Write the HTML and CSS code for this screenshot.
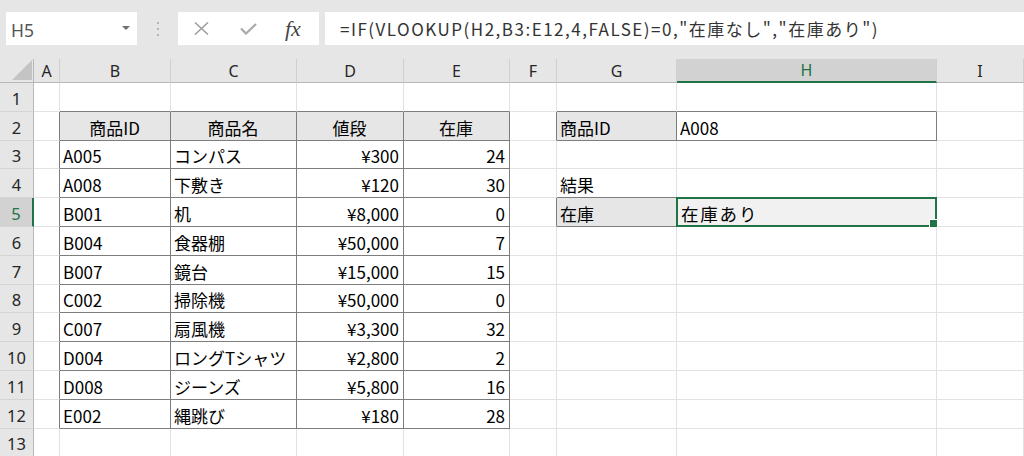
FILE: index.html
```html
<!DOCTYPE html>
<html lang="ja">
<head>
<meta charset="UTF-8">
<meta name="viewport" content="width=device-width, initial-scale=1.0">
<title>在庫確認</title>
<link rel="stylesheet" href="styles.css">
</head>
<body>

<!-- 数式バー -->
<div class="toolbar">
  <div class="namebox">
    <span>H5</span>
    <span class="arrow"></span>
  </div>
  <div class="grip"><i></i><i></i><i></i></div>
  <div class="buttons">
    <svg class="ic-x" width="15" height="13" viewBox="0 0 15 13"><path d="M1 0.5L14 12.5M14 0.5L1 12.5" stroke="#9c9c9c" stroke-width="1.5" fill="none"/></svg>
    <svg class="ic-ok" width="17" height="12" viewBox="0 0 17 12"><path d="M1 5.5L6 10.5L16 1" stroke="#a9a9a9" stroke-width="2.2" fill="none"/></svg>
    <span class="fx">fx</span>
  </div>
  <div class="formula">=IF(VLOOKUP(H2,B3:E12,4,FALSE)=0,"在庫なし","在庫あり")</div>
</div>

<!-- シート -->
<div class="sheet">
  <div class="corner"><span></span></div>
  <div class="ch">A</div>
  <div class="ch">B</div>
  <div class="ch">C</div>
  <div class="ch">D</div>
  <div class="ch">E</div>
  <div class="ch">F</div>
  <div class="ch">G</div>
  <div class="ch cur">H</div>
  <div class="ch">I</div>

  <!-- 1 -->
  <div class="rh">1</div>
  <div class="c"></div>
  <div class="c bb"></div>
  <div class="c bb"></div>
  <div class="c bb"></div>
  <div class="c bb"></div>
  <div class="c"></div>
  <div class="c bb"></div>
  <div class="c bb"></div>
  <div class="c"></div>

  <!-- 2 -->
  <div class="rh">2</div>
  <div class="c br"></div>
  <div class="c t th m">商品ID</div>
  <div class="c t th m">商品名</div>
  <div class="c t th m">値段</div>
  <div class="c t th m">在庫</div>
  <div class="c br"></div>
  <div class="c t th">商品ID</div>
  <div class="c t">A008</div>
  <div class="c"></div>

  <!-- 3 -->
  <div class="rh">3</div>
  <div class="c br"></div>
  <div class="c t">A005</div>
  <div class="c t">コンパス</div>
  <div class="c t r">¥300</div>
  <div class="c t r">24</div>
  <div class="c"></div>
  <div class="c"></div>
  <div class="c"></div>
  <div class="c"></div>

  <!-- 4 -->
  <div class="rh">4</div>
  <div class="c br"></div>
  <div class="c t">A008</div>
  <div class="c t">下敷き</div>
  <div class="c t r">¥120</div>
  <div class="c t r">30</div>
  <div class="c"></div>
  <div class="c bb">結果</div>
  <div class="c"></div>
  <div class="c"></div>

  <!-- 5 -->
  <div class="rh cur">5</div>
  <div class="c br"></div>
  <div class="c t">B001</div>
  <div class="c t">机</div>
  <div class="c t r">¥8,000</div>
  <div class="c t r">0</div>
  <div class="c br"></div>
  <div class="c t th">在庫</div>
  <div class="c sel">在庫あり</div>
  <div class="c"></div>

  <!-- 6 -->
  <div class="rh">6</div>
  <div class="c br"></div>
  <div class="c t">B004</div>
  <div class="c t">食器棚</div>
  <div class="c t r">¥50,000</div>
  <div class="c t r">7</div>
  <div class="c"></div>
  <div class="c"></div>
  <div class="c"></div>
  <div class="c"></div>

  <!-- 7 -->
  <div class="rh">7</div>
  <div class="c br"></div>
  <div class="c t">B007</div>
  <div class="c t">鏡台</div>
  <div class="c t r">¥15,000</div>
  <div class="c t r">15</div>
  <div class="c"></div>
  <div class="c"></div>
  <div class="c"></div>
  <div class="c"></div>

  <!-- 8 -->
  <div class="rh">8</div>
  <div class="c br"></div>
  <div class="c t">C002</div>
  <div class="c t">掃除機</div>
  <div class="c t r">¥50,000</div>
  <div class="c t r">0</div>
  <div class="c"></div>
  <div class="c"></div>
  <div class="c"></div>
  <div class="c"></div>

  <!-- 9 -->
  <div class="rh">9</div>
  <div class="c br"></div>
  <div class="c t">C007</div>
  <div class="c t">扇風機</div>
  <div class="c t r">¥3,300</div>
  <div class="c t r">32</div>
  <div class="c"></div>
  <div class="c"></div>
  <div class="c"></div>
  <div class="c"></div>

  <!-- 10 -->
  <div class="rh">10</div>
  <div class="c br"></div>
  <div class="c t">D004</div>
  <div class="c t">ロングTシャツ</div>
  <div class="c t r">¥2,800</div>
  <div class="c t r">2</div>
  <div class="c"></div>
  <div class="c"></div>
  <div class="c"></div>
  <div class="c"></div>

  <!-- 11 -->
  <div class="rh">11</div>
  <div class="c br"></div>
  <div class="c t">D008</div>
  <div class="c t">ジーンズ</div>
  <div class="c t r">¥5,800</div>
  <div class="c t r">16</div>
  <div class="c"></div>
  <div class="c"></div>
  <div class="c"></div>
  <div class="c"></div>

  <!-- 12 -->
  <div class="rh">12</div>
  <div class="c br"></div>
  <div class="c t">E002</div>
  <div class="c t">縄跳び</div>
  <div class="c t r">¥180</div>
  <div class="c t r">28</div>
  <div class="c"></div>
  <div class="c"></div>
  <div class="c"></div>
  <div class="c"></div>

  <!-- 13 -->
  <div class="rh">13</div>
  <div class="c"></div>
  <div class="c"></div>
  <div class="c"></div>
  <div class="c"></div>
  <div class="c"></div>
  <div class="c"></div>
  <div class="c"></div>
  <div class="c"></div>
  <div class="c"></div>
</div>

</body>
</html>
```

FILE: styles.css
```css
* {
  box-sizing: border-box;
}

body {
  margin: 0;
  width: 1024px;
  height: 456px;
  overflow: hidden;
  background: #fff;
  font-family: "Noto Sans", sans-serif;
}

/* 数式バー */
.toolbar {
  display: flex;
  align-items: flex-start;
  height: 59px;
  padding: 12px 0 0 6px;
  background: #e6e6e6;
}

.namebox {
  display: flex;
  align-items: center;
  justify-content: space-between;
  width: 131px;
  height: 33px;
  padding: 3px 7px 0 5px;
  background: #fff;
  color: #555;
  font-size: 17.5px;
}

.arrow {
  width: 0;
  height: 0;
  margin-top: -5px;
  border-left: 4px solid transparent;
  border-right: 4px solid transparent;
  border-top: 4px solid #707070;
}

.grip {
  display: flex;
  flex-direction: column;
  gap: 4px;
  margin: 10px 19px 0 20px;
}

.grip i {
  width: 2px;
  height: 2px;
  background: #b4b4b4;
}

.buttons {
  display: flex;
  align-items: center;
  width: 141px;
  height: 33px;
  background: #fff;
}

.ic-x {
  margin-left: 16px;
}

.ic-ok {
  margin-left: 31px;
}

.fx {
  margin-left: 28px;
  font-family: "Liberation Serif", serif;
  font-style: italic;
  font-size: 22px;
  color: #444;
}

.formula {
  flex: 1;
  display: flex;
  align-items: center;
  height: 33px;
  margin-left: 6px;
  padding-left: 15px;
  background: #fff;
  color: #333;
  font-family: "Noto Sans CJK JP", sans-serif;
  font-size: 17px;
  letter-spacing: 1.5px;
  white-space: nowrap;
}

/* シート */
.sheet {
  display: grid;
  grid-template-columns: 34px 26px 111px 126px 107px 106px 47px 120px 260px 87px;
  grid-template-rows: 24px repeat(13, 28.8px);
  font-family: "Noto Sans CJK JP", sans-serif;
  font-size: 17px;
}

.corner {
  display: flex;
  align-items: flex-end;
  justify-content: flex-end;
  padding: 0 1px 2px 0;
  background: #e6e6e6;
  border-right: 1px solid #b8b8b8;
  border-bottom: 1px solid #b8b8b8;
}

.corner span {
  width: 20px;
  height: 20px;
  background: #c4c4c4;
  clip-path: polygon(100% 0, 100% 100%, 0 100%);
}

/* 列見出し */
.ch {
  display: flex;
  align-items: center;
  justify-content: center;
  background: #e6e6e6;
  border-right: 1px solid #d0d0d0;
  border-bottom: 1px solid #b8b8b8;
  color: #262626;
  font-family: "Noto Sans", sans-serif;
  font-size: 16px;
}

.ch.cur {
  background: #d2d2d2;
  border-bottom: 2px solid #217346;
  color: #217346;
}

/* 行見出し */
.rh {
  display: flex;
  align-items: center;
  justify-content: center;
  padding-top: 3px;
  background: #e6e6e6;
  border-right: 1px solid #b8b8b8;
  border-bottom: 1px solid #d4d4d4;
  color: #262626;
  font-family: "Noto Sans", sans-serif;
  font-size: 16.5px;
}

.rh.cur {
  background: #d2d2d2;
  border-right: 2px solid #217346;
  color: #217346;
}

/* セル */
.c {
  display: flex;
  align-items: flex-end;
  padding: 0 4px 2px 3px;
  border-right: 1px solid #e2e2e2;
  border-bottom: 1px solid #e2e2e2;
  line-height: 20px;
  white-space: nowrap;
}

.c.t {
  border-right-color: #7d7d7d;
  border-bottom-color: #7d7d7d;
}

.c.th {
  background: #e6e6e6;
}

.c.m {
  justify-content: center;
}

.c.r {
  justify-content: flex-end;
}

.c.bb {
  border-bottom-color: #7d7d7d;
}

.c.br {
  border-right-color: #7d7d7d;
}

/* 選択中のセル */
.c.sel {
  position: relative;
  z-index: 1;
  padding-left: 4px;
  background: #f1f1f1;
  font-size: 17.5px;
  letter-spacing: 1.8px;
}

.c.sel::after {
  content: "";
  position: absolute;
  left: -1px;
  top: -1px;
  right: -1px;
  bottom: -1px;
  border: 2px solid #217346;
}

.c.sel::before {
  content: "";
  position: absolute;
  right: -2px;
  bottom: -2px;
  width: 7px;
  height: 7px;
  background: #217346;
  border: 1px solid #fff;
  z-index: 2;
}
```
